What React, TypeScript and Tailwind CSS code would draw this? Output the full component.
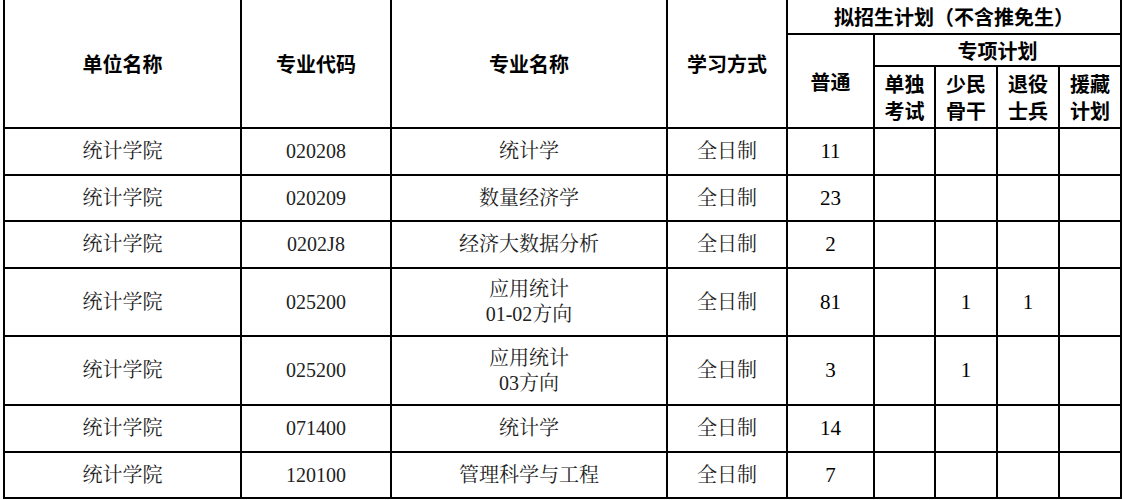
const rows = [
  { unit: "统计学院", code: "020208", name: ["统计学"], mode: "全日制", normal: "11", h: "h-[47px]", sp: ["", "", "", ""] },
  { unit: "统计学院", code: "020209", name: ["数量经济学"], mode: "全日制", normal: "23", h: "h-[46px]", sp: ["", "", "", ""] },
  { unit: "统计学院", code: "0202J8", name: ["经济大数据分析"], mode: "全日制", normal: "2", h: "h-[47px]", sp: ["", "", "", ""] },
  { unit: "统计学院", code: "025200", name: ["应用统计", "01-02方向"], mode: "全日制", normal: "81", h: "h-[68px]", sp: ["", "1", "1", ""] },
  { unit: "统计学院", code: "025200", name: ["应用统计", "03方向"], mode: "全日制", normal: "3", h: "h-[69px]", sp: ["", "1", "", ""] },
  { unit: "统计学院", code: "071400", name: ["统计学"], mode: "全日制", normal: "14", h: "h-[47px]", sp: ["", "", "", ""] },
  { unit: "统计学院", code: "120100", name: ["管理科学与工程"], mode: "全日制", normal: "7", h: "h-[46px]", sp: ["", "", "", ""] },
];

const th = "border-2 border-black p-0 text-center align-middle font-bold text-black";
const td = "border-2 border-black p-0 text-center align-middle";

export default function App() {
  return (
    <div className="w-[1125px] h-[500px] overflow-hidden bg-white">
      <table
        className="ml-[3px] mt-[-2px] w-[1119px] table-fixed border-collapse text-[20px] leading-[25px]"
        style={{ fontFamily: '"Liberation Serif", "Noto Serif CJK SC", "Noto Sans CJK SC", serif' }}
      >
        <colgroup>
          <col className="w-[237px]" />
          <col className="w-[150px]" />
          <col className="w-[276px]" />
          <col className="w-[120px]" />
          <col className="w-[87px]" />
          <col className="w-[61px]" />
          <col className="w-[62px]" />
          <col className="w-[62px]" />
          <col className="w-[62px]" />
        </colgroup>
        <thead style={{ fontFamily: '"Noto Sans CJK SC", sans-serif' }}>
          <tr>
            <th rowSpan={3} className={th}>单位名称</th>
            <th rowSpan={3} className={th}>专业代码</th>
            <th rowSpan={3} className={th}>专业名称</th>
            <th rowSpan={3} className={th}>学习方式</th>
            <th colSpan={5} className={`${th} h-[35px]`}>拟招生计划（不含推免生）</th>
          </tr>
          <tr>
            <th rowSpan={2} className={th}>普通</th>
            <th colSpan={4} className={`${th} h-[32px]`}>专项计划</th>
          </tr>
          <tr className="leading-[27px]">
            <th className={`${th} h-[62px]`}>单独<br />考试</th>
            <th className={th}>少民<br />骨干</th>
            <th className={th}>退役<br />士兵</th>
            <th className={th}>援藏<br />计划</th>
          </tr>
        </thead>
        <tbody className="text-[#222]">
          {rows.map((r, i) => (
            <tr key={i}>
              <td className={`${td} ${r.h}`}>{r.unit}</td>
              <td className={td}>{r.code}</td>
              <td className={td}>
                {r.name.map((n, j) => (
                  <div key={j}>{n}</div>
                ))}
              </td>
              <td className={td}>{r.mode}</td>
              <td className={`${td} text-[21px] text-black`}>{r.normal}</td>
              {r.sp.map((s, j) => (
                <td key={j} className={`${td} text-[21px] text-black`}>{s}</td>
              ))}
            </tr>
          ))}
        </tbody>
      </table>
    </div>
  );
}
